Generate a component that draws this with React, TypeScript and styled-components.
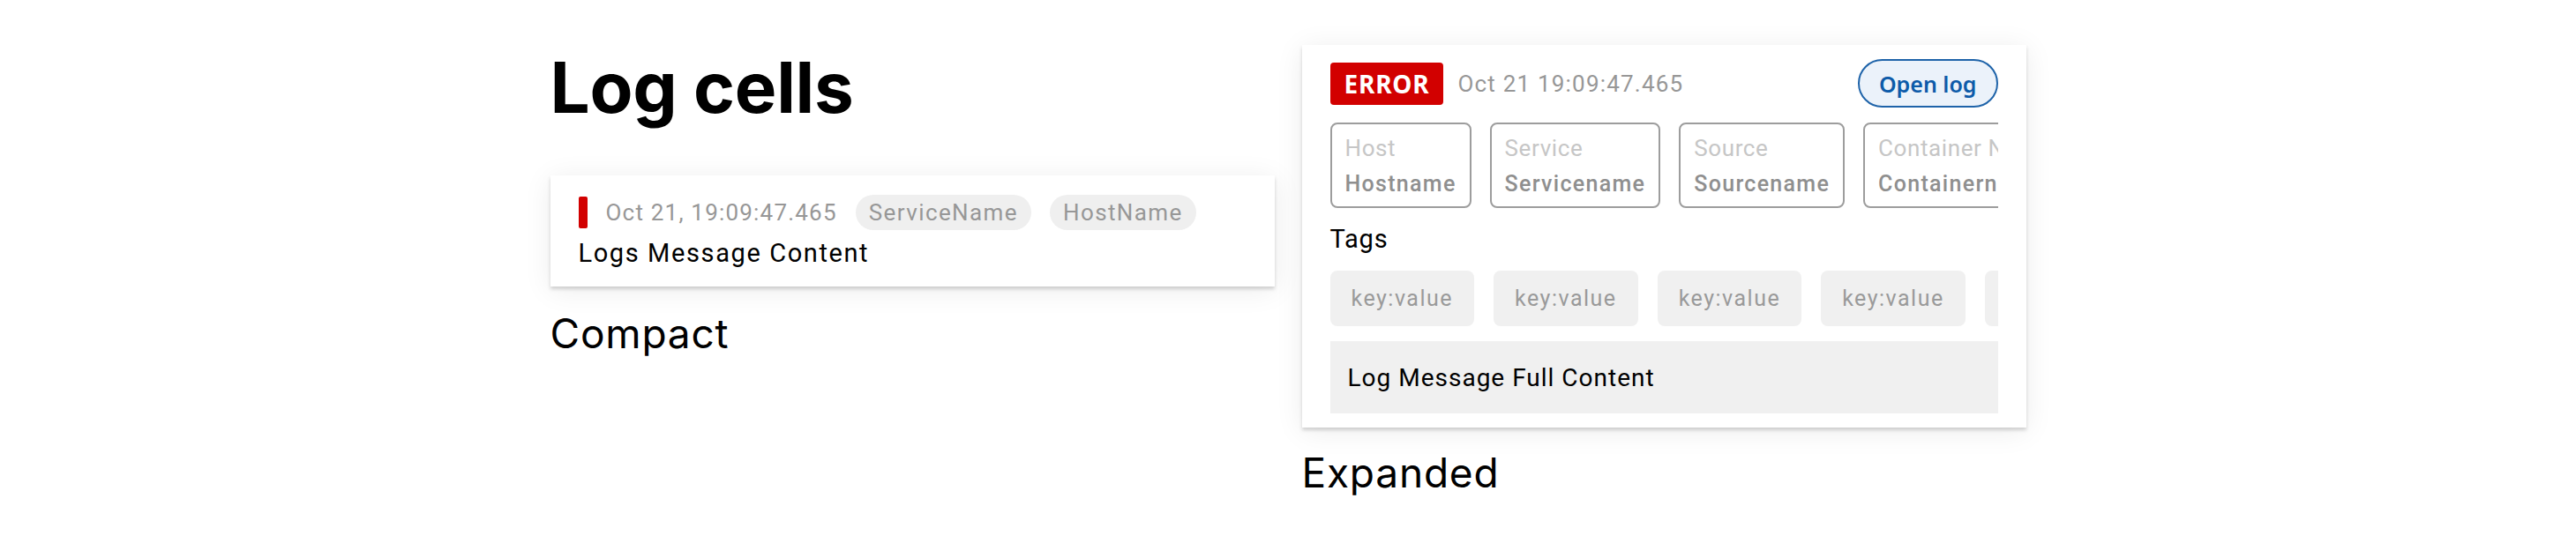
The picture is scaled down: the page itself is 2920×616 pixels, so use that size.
import React from "react";
import styled, { createGlobalStyle } from "styled-components";

const Global = createGlobalStyle`
  html, body {
    margin: 0;
    padding: 0;
    background: #ffffff;
  }
  body {
    font-family: Roboto, "Liberation Sans", sans-serif;
    color: #000;
  }
  * { box-sizing: border-box; }
`;

const Page = styled.div`
  width: 2920px;
  height: 616px;
  display: flex;
  justify-content: center;
  align-items: flex-start;
  gap: 31px;
  padding-top: 51px;
  overflow: hidden;
`;

const Column = styled.div`
  width: 821px;
  display: flex;
  flex-direction: column;
`;

const Title = styled.h1`
  margin: 0;
  font-family: Inter, "Liberation Sans", sans-serif;
  font-weight: 700;
  font-size: 80px;
  line-height: 96px;
  letter-spacing: -0.3px;
  color: #000;
`;

const SectionLabel = styled.div<{ $top: number }>`
  margin-top: ${(p) => p.$top}px;
  font-family: Inter, "Liberation Sans", sans-serif;
  font-weight: 400;
  font-size: 46px;
  line-height: 56px;
  letter-spacing: 0.8px;
  color: #000;
`;

const Card = styled.div<{ $top?: number }>`
  margin-top: ${(p) => p.$top ?? 0}px;
  background: #fff;
  box-shadow: 0 3px 4px rgba(0, 0, 0, 0.16), 0 4px 30px rgba(0, 0, 0, 0.08);
`;

const CompactCard = styled(Card)`
  padding: 22px 32px 20px;
  display: flex;
  flex-direction: column;
  gap: 8px;
`;

const CompactRow = styled.div`
  display: flex;
  align-items: center;
  height: 40px;
  gap: 21px;
`;

const LevelBar = styled.span<{ $color: string }>`
  width: 10px;
  height: 36px;
  border-radius: 2px;
  background: ${(p) => p.$color};
  flex-shrink: 0;
`;

const Timestamp = styled.span<{ $spacing: number }>`
  font-size: 26px;
  letter-spacing: ${(p) => p.$spacing}px;
  color: #979797;
  white-space: nowrap;
`;

const Pill = styled.span`
  height: 40px;
  display: inline-flex;
  align-items: center;
  padding: 0 15px;
  border-radius: 20px;
  background: #efefef;
  color: #979797;
  font-size: 26px;
  letter-spacing: 1.4px;
  white-space: nowrap;
`;

const CompactMessage = styled.div`
  font-size: 29px;
  line-height: 36px;
  letter-spacing: 1.6px;
  color: #000;
  white-space: nowrap;
`;

const ExpandedCard = styled(Card)`
  padding: 16px 32px;
  display: flex;
  flex-direction: column;
  gap: 17px;
`;

const Header = styled.div`
  height: 55px;
  display: flex;
  align-items: center;
`;

const LevelBadge = styled.span<{ $color: string }>`
  height: 48px;
  padding: 0 16px;
  display: inline-flex;
  align-items: center;
  border-radius: 4px;
  background: ${(p) => p.$color};
  color: #fff;
  font-family: "Noto Sans", "Open Sans", sans-serif;
  font-weight: 700;
  font-size: 28px;
  letter-spacing: 0.8px;
  margin-right: 16px;
`;

const OpenButton = styled.button`
  margin-left: auto;
  height: 55px;
  padding: 0 22px;
  border: 2px solid #1e63a9;
  border-radius: 28px;
  background: #ebf2fa;
  color: #0d5ba9;
  font-family: "Noto Sans", "Open Sans", sans-serif;
  font-weight: 600;
  font-size: 25px;
  cursor: pointer;
  white-space: nowrap;
`;

const ClipRow = styled.div<{ $gap: number }>`
  display: flex;
  gap: ${(p) => p.$gap}px;
  overflow: hidden;
`;

const Attribute = styled.div`
  flex-shrink: 0;
  height: 97px;
  padding: 7px 15px 4px;
  border: 2px solid #9d9d9d;
  border-radius: 8px;
  display: flex;
  flex-direction: column;
  white-space: nowrap;
`;

const AttrLabel = styled.span`
  font-size: 26px;
  line-height: 40px;
  letter-spacing: 0.6px;
  color: #c6c6c6;
`;

const AttrValue = styled.span`
  font-size: 25px;
  font-weight: 500;
  line-height: 42px;
  letter-spacing: 1.3px;
  color: #8f8f8f;
`;

const SubHeading = styled.div`
  font-size: 29px;
  line-height: 37px;
  letter-spacing: 0.8px;
  color: #000;
`;

const TagChip = styled.span`
  flex-shrink: 0;
  height: 63px;
  padding: 0 24px;
  display: inline-flex;
  align-items: center;
  border-radius: 8px;
  background: #f0f0f0;
  color: #9a9a9a;
  font-size: 25px;
  letter-spacing: 1.5px;
  white-space: nowrap;
`;

const MessageBox = styled.div`
  height: 82px;
  padding: 0 20px;
  display: flex;
  align-items: center;
  background: #f0f0f0;
  font-size: 28px;
  letter-spacing: 1px;
  color: #000;
  white-space: nowrap;
`;

const attributes = [
  { label: "Host", value: "Hostname" },
  { label: "Service", value: "Servicename" },
  { label: "Source", value: "Sourcename" },
  { label: "Container Name", value: "Containername" },
];

const tags = ["key:value", "key:value", "key:value", "key:value", "key:value"];

const ERROR_RED = "#d20000";

export default function App() {
  return (
    <>
      <Global />
      <Page>
        <Column>
          <Title>Log cells</Title>
          <CompactCard $top={52}>
            <CompactRow>
              <LevelBar $color={ERROR_RED} />
              <Timestamp $spacing={1.2}>Oct 21, 19:09:47.465</Timestamp>
              <Pill>ServiceName</Pill>
              <Pill>HostName</Pill>
            </CompactRow>
            <CompactMessage>Logs Message Content</CompactMessage>
          </CompactCard>
          <SectionLabel $top={25}>Compact</SectionLabel>
        </Column>
        <Column>
          <ExpandedCard>
            <Header>
              <LevelBadge $color={ERROR_RED}>ERROR</LevelBadge>
              <Timestamp $spacing={1.2}>Oct 21 19:09:47.465</Timestamp>
              <OpenButton>Open log</OpenButton>
            </Header>
            <ClipRow $gap={21}>
              {attributes.map((a) => (
                <Attribute key={a.label}>
                  <AttrLabel>{a.label}</AttrLabel>
                  <AttrValue>{a.value}</AttrValue>
                </Attribute>
              ))}
            </ClipRow>
            <SubHeading>Tags</SubHeading>
            <ClipRow $gap={22}>
              {tags.map((t, i) => (
                <TagChip key={i}>{t}</TagChip>
              ))}
            </ClipRow>
            <MessageBox>Log Message Full Content</MessageBox>
          </ExpandedCard>
          <SectionLabel $top={23}>Expanded</SectionLabel>
        </Column>
      </Page>
    </>
  );
}
